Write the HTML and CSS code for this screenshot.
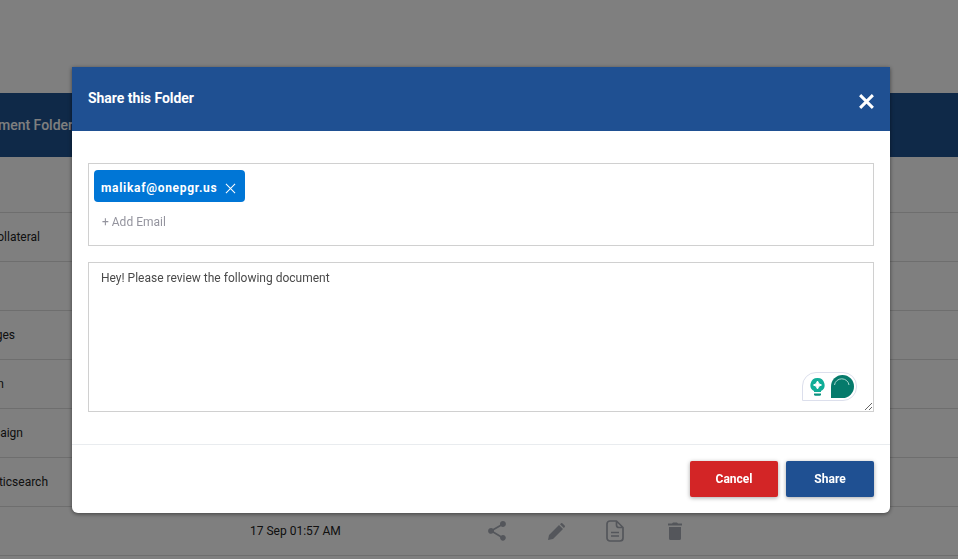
FILE: index.html
```html
<!DOCTYPE html>
<html lang="en">
<head>
<meta charset="utf-8">
<title>Share this Folder</title>
<link rel="stylesheet" href="styles.css">
</head>
<body>
<main class="page">
  <div class="page-top"></div>
  <div class="folder-bar"><span class="name folder-title">Document Folder</span></div>
  <div class="row row-first"></div>
  <div class="row"><span class="name name-collateral">Collateral</span></div>
  <div class="row"></div>
  <div class="row"><span class="name name-images">Images</span></div>
  <div class="row"><span class="name name-n">Design</span></div>
  <div class="row"><span class="name name-campaign">Campaign</span></div>
  <div class="row"><span class="name name-search">Elasticsearch</span></div>
  <div class="row row-actions">
    <span class="date">17 Sep 01:57 AM</span>
    <span class="actions">
      <svg class="act act-share" viewBox="3 2 18 20.200"><path d="M18 16.080c-.76 0-1.440.3-1.960.77L8.910 12.700c.05-.23.09-.46.09-.7s-.04-.47-.09-.7l7.050-4.110c.54.5 1.250.81 2.040.81 1.660 0 3-1.340 3-3s-1.340-3-3-3-3 1.340-3 3c0 .24.04.47.09.7L8.040 9.810C7.500 9.310 6.790 9 6 9c-1.660 0-3 1.340-3 3s1.340 3 3 3c.79 0 1.500-.31 2.040-.81l7.120 4.160c-.05.21-.08.43-.08.65 0 1.610 1.310 2.920 2.920 2.920s2.920-1.310 2.920-2.920-1.310-2.920-2.920-2.920z"/></svg>
      <svg class="act act-pencil" viewBox="0 0 17 17"><path d="M0 17l1-5L11 2l4 4L5 16zM12 1.200l.8-.8a1.300 1.300 0 0 1 1.800 0l2 2a1.300 1.300 0 0 1 0 1.800l-.8.8z"/></svg>
      <svg class="act-doc" viewBox="0 0 18 22"><path d="M4 1h6.500L17 7.500V18a3 3 0 0 1-3 3H4a3 3 0 0 1-3-3V4a3 3 0 0 1 3-3zM10.500 1v4A2.500 2.500 0 0 0 13 7.500h4M5 12.500h8M5 16h8"/></svg>
      <svg class="act act-trash" viewBox="0 0 14 18"><path d="M1 5h12v11.500a1.500 1.500 0 0 1-1.500 1.500h-9A1.500 1.500 0 0 1 1 16.500zM0 1.500h4l1-1h4l1 1h4v2H0z"/></svg>
    </span>
  </div>
  <div class="row row-last"></div>
</main>

<div class="overlay">
  <section class="modal">
    <header class="modal-head">
      <h2 class="modal-title">Share this Folder</h2>
      <svg class="modal-close" viewBox="0 0 16 16"><path d="M2 2l12 12M14 2L2 14"/></svg>
    </header>
    <div class="modal-body">
      <div class="email-box">
        <span class="chip">malikaf@onepgr.us
          <svg class="chip-x" viewBox="0 0 12 12"><path d="M1 1l10 10M11 1L1 11"/></svg>
        </span>
        <span class="add-email">+ Add Email</span>
      </div>
      <div class="message-wrap">
        <textarea class="message">Hey! Please review the following document</textarea>
        <div class="assist">
          <svg class="assist-bulb" viewBox="0 0 15 18"><path class="bulb" d="M7.500 0a7 7 0 0 0-3.500 13.100V14h7v-.9A7 7 0 0 0 7.500 0z"/><path class="bulb-foot" d="M4 15.500h7v.7a1.500 1.500 0 0 1-1.500 1.500h-4A1.500 1.500 0 0 1 4 16.200z"/><path class="bulb-star" d="M7.500 3L8.800 5.700 11.500 7 8.800 8.300 7.500 11 6.200 8.300 3.500 7 6.200 5.700z"/></svg>
          <svg class="assist-mark" viewBox="0 0 23 23"><path class="mark" d="M0 23V11.500A11.500 11.500 0 0 1 23 11.500 11.500 11.500 0 0 1 11.500 23z"/><path class="mark-arc" d="M3.500 10a7.300 7 0 0 1 14.500 0"/></svg>
        </div>
      </div>
    </div>
    <footer class="modal-foot">
      <button class="btn btn-cancel" type="button">Cancel</button>
      <button class="btn btn-share" type="button">Share</button>
    </footer>
  </section>
</div>
</body>
</html>
```
FILE: styles.css
```css
* { box-sizing: border-box; }
html, body { margin: 0; height: 100%; overflow: hidden; }
body { font-family: Roboto, "Liberation Sans", sans-serif; font-size: 12px; color: #222; background: #fff; }

.page { display: flex; flex-direction: column; height: 559px; overflow: hidden; }
.page-top { height: 93px; flex: none; }
.folder-bar { height: 64px; flex: none; background: #1e5290; display: flex; align-items: center; }
.folder-title { width: 73px; font-size: 14px; font-weight: 500; color: #fff; }

.row { height: 49px; flex: none; border-bottom: 1px solid #ddd; display: flex; align-items: center; }
.row-first { height: 56px; }
.row-last { height: 3px; border-bottom: 0; }
.name { white-space: nowrap; display: flex; justify-content: flex-end; flex: none; }
.name-collateral { width: 40px; }
.name-images { width: 15px; }
.name-n { width: 4px; }
.name-campaign { width: 23px; }
.name-search { width: 48px; }
.row-actions { padding-left: 250px; }
.date { width: 90px; white-space: nowrap; }
.actions { display: flex; align-items: center; margin-left: 147px; gap: 41px; }
.act { display: block; fill: #a8adb6; flex: none; }
.act-share { width: 20px; height: 20px; }
.act-pencil { width: 17px; height: 17px; }
.act-doc { width: 18px; height: 22px; display: block; flex: none; fill: none; stroke: #a8adb6; stroke-width: 1.700; stroke-linejoin: round; }
.act-trash { width: 14px; height: 18px; margin-left: 3px; }

.overlay { position: fixed; inset: 0; background: rgba(0, 0, 0, .5); }
.modal { position: absolute; left: 72px; top: 67px; width: 818px; height: 446px; background: #fff; border-radius: 0 0 6px 6px; box-shadow: 0 1px 4px rgba(0, 0, 0, .5); display: flex; flex-direction: column; overflow: hidden; }
.modal-head { height: 64px; flex: none; background: #1f5092; display: flex; justify-content: space-between; padding: 0 15px 0 16px; align-items: flex-start; }
.modal-title { margin: 23px 0 0; font-size: 14px; line-height: 16px; font-weight: 700; color: #fff; letter-spacing: -.05px; }
.modal-close { width: 17px; height: 17px; margin-top: 26px; fill: none; stroke: #fff; stroke-width: 2.800; }

.modal-body { flex: 1; padding: 32px 16px 0; display: flex; flex-direction: column; gap: 16px; }
.email-box { height: 83px; border: 1px solid #d0d0d0; padding: 6px 5px; display: flex; flex-direction: column; align-items: flex-start; }
.chip { height: 32px; width: 151px; background: #0076d6; color: #fff; border-radius: 4px; display: flex; align-items: center; justify-content: space-between; padding: 4px 9px 0 7px; font-weight: 700; font-size: 12px; letter-spacing: .7px; }
.chip-x { width: 11px; height: 11px; fill: none; stroke: #fff; stroke-width: 1.100; }
.add-email { margin: 13px 0 0 8px; color: #94949e; line-height: 15px; }

.message-wrap { position: relative; height: 150px; }
.message { width: 100%; height: 150px; display: block; margin: 0; border: 1px solid #d0d0d0; border-radius: 0; padding: 8px 12px; font: 12px/15px Roboto, "Liberation Sans", sans-serif; color: #4a4a4a; outline: 0; }
.assist { position: absolute; right: 17px; bottom: 11px; width: 55px; height: 29px; border: 1px solid #dcdfec; border-radius: 14px 14px 14px 0; display: flex; align-items: center; gap: 6px; padding-left: 7px; background: #fff; }
.assist-bulb { width: 15px; height: 18px; flex: none; }
.bulb { fill: #10ad97; }
.bulb-foot { fill: #0b917f; }
.bulb-star { fill: #fff; stroke: #fff; stroke-width: 1; stroke-linejoin: round; }
.assist-mark { width: 23px; height: 23px; flex: none; }
.mark { fill: #057a6b; }
.mark-arc { fill: none; stroke: #a8d8cf; stroke-width: 1; }

.modal-foot { height: 69px; flex: none; border-top: 1px solid #e9ecef; display: flex; justify-content: flex-end; gap: 8px; padding: 16px 16px 0; }
.btn { width: 88px; height: 36px; border: 0; border-radius: 2px; color: #fff; font: 700 12px Roboto, "Liberation Sans", sans-serif; box-shadow: 0 1px 4px rgba(0, 0, 0, .35); }
.btn-cancel { background: #d32526; }
.btn-share { background: #1f5092; }
```
